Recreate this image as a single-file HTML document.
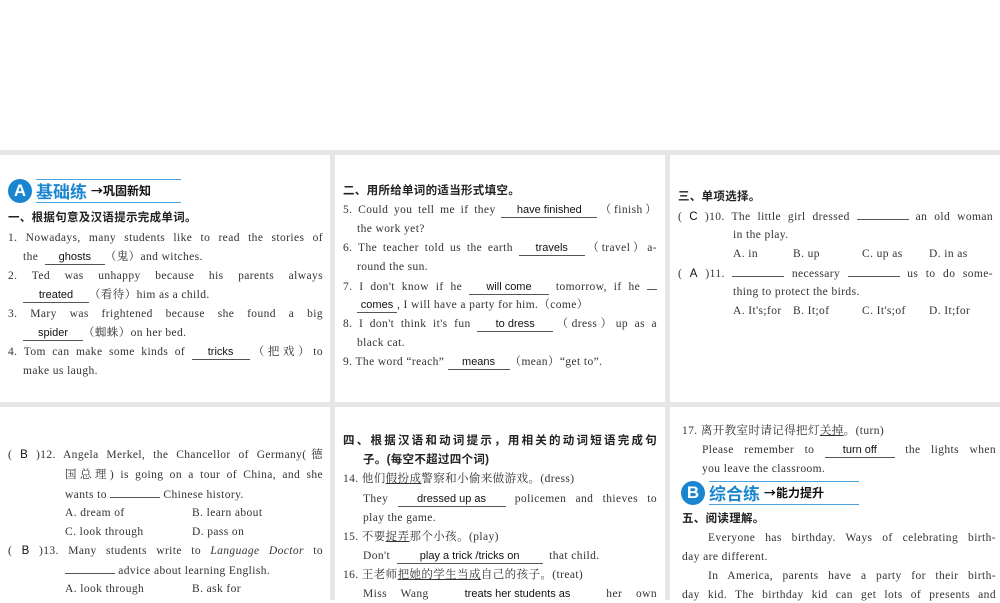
<!DOCTYPE html>
<html><head><meta charset="utf-8">
<style>
*{margin:0;padding:0;box-sizing:border-box}
body{width:1000px;height:600px;position:relative;background:#fff;overflow:hidden;font-family:"Liberation Serif","Noto Serif CJK SC",serif;color:#333}
.bg{position:absolute;left:0;top:150px;width:1000px;height:450px;background:#e6e6e6}
.p{position:absolute;background:#fff}
.l{position:absolute;white-space:nowrap;font-size:11.5px;line-height:16px;height:16px;letter-spacing:.4px}
.j{text-align:justify;text-align-last:justify}
.h{font-family:"Liberation Sans","Noto Sans CJK SC",sans-serif;font-weight:bold;font-size:11.5px;color:#222;letter-spacing:.3px}
.a{display:inline-block;border-bottom:1px solid #555;text-align:center;text-align-last:center;font-family:"Liberation Sans",sans-serif;font-size:11px;color:#111;line-height:13px;white-space:nowrap;letter-spacing:0}
.b{display:inline-block;border-bottom:1px solid #555;height:12px}
.k{font-family:"Liberation Sans",sans-serif;color:#111}
.badge{position:absolute;height:24px}
.badge .c{position:absolute;left:0;top:0;width:24px;height:24px;border-radius:50%;background:#1a86d0;color:#fff;font:bold 17px/24px "Liberation Sans",sans-serif;text-align:center}
.badge .t{position:absolute;left:28px;top:0;height:24px;border-top:1px solid #4aa3dc;border-bottom:1px solid #4aa3dc;white-space:nowrap;font-family:"Noto Sans CJK SC",sans-serif;display:flex;align-items:center;gap:4px;overflow:hidden}
.badge .t b{color:#1a86d0;font-size:17px;font-weight:bold;line-height:20px}
.badge .t i{font-style:normal;font-weight:bold;font-size:12px;color:#111;line-height:20px}
</style></head><body>
<div class="bg"></div>
<div class="p" style="left:0;top:155px;width:330px;height:247px"></div>
<div class="p" style="left:335px;top:155px;width:330px;height:247px"></div>
<div class="p" style="left:670px;top:155px;width:330px;height:247px"></div>
<div class="p" style="left:0;top:407px;width:330px;height:193px"></div>
<div class="p" style="left:335px;top:407px;width:330px;height:193px"></div>
<div class="p" style="left:670px;top:407px;width:330px;height:193px"></div>

<!-- panel 1 -->
<div class="badge" style="left:8px;top:179px"><div class="c">A</div><div class="t" style="width:145px"><b>基础练</b><i>→巩固新知</i></div></div>
<div class="l h" style="left:8px;top:210px">一、根据句意及汉语提示完成单词。</div>
<div class="l j" style="left:8px;top:230px;width:315px">1. Nowadays, many students like to read the stories of</div>
<div class="l" style="left:23px;top:249px">the &nbsp;<span class="a" style="width:60px">ghosts</span>（鬼）and witches.</div>
<div class="l j" style="left:8px;top:268px;width:315px">2. Ted was unhappy because his parents always</div>
<div class="l" style="left:23px;top:287px"><span class="a" style="width:66px">treated</span>（看待）him as a child.</div>
<div class="l j" style="left:8px;top:306px;width:315px">3. Mary was frightened because she found a big</div>
<div class="l" style="left:23px;top:325px"><span class="a" style="width:60px">spider</span>（蜘蛛）on her bed.</div>
<div class="l j" style="left:8px;top:344px;width:315px">4. Tom can make some kinds of <span class="a" style="width:58px">tricks</span>（把戏）to</div>
<div class="l" style="left:23px;top:363px">make us laugh.</div>

<!-- panel 2 -->
<div class="l h" style="left:343px;top:183px">二、用所给单词的适当形式填空。</div>
<div class="l j" style="left:343px;top:202px;width:314px">5. Could you tell me if they <span class="a" style="width:96px">have finished</span>（finish）</div>
<div class="l" style="left:357px;top:221px">the work yet?</div>
<div class="l j" style="left:343px;top:240px;width:314px">6. The teacher told us the earth <span class="a" style="width:66px">travels</span>（travel）a-</div>
<div class="l" style="left:357px;top:259px">round the sun.</div>
<div class="l j" style="left:343px;top:278px;width:314px">7. I don't know if he <span class="a" style="width:80px">will come</span> tomorrow, if he <span class="b" style="width:10px"></span></div>
<div class="l" style="left:357px;top:297px"><span class="a" style="width:40px">comes</span>, I will have a party for him.（come）</div>
<div class="l j" style="left:343px;top:316px;width:314px">8. I don't think it's fun <span class="a" style="width:76px">to dress</span>（dress）up as a</div>
<div class="l" style="left:357px;top:335px">black cat.</div>
<div class="l" style="left:343px;top:354px">9. The word “reach” <span class="a" style="width:62px">means</span>（mean）“get to”.</div>

<!-- panel 3 -->
<div class="l h" style="left:678px;top:189px">三、单项选择。</div>
<div class="l j" style="left:678px;top:208px;width:315px">( <span class="k">C</span> )10. The little girl dressed <span class="b" style="width:52px"></span> an old woman</div>
<div class="l" style="left:733px;top:227px">in the play.</div>
<div class="l" style="left:733px;top:246px">A. in</div><div class="l" style="left:793px;top:246px">B. up</div><div class="l" style="left:862px;top:246px">C. up as</div><div class="l" style="left:929px;top:246px">D. in as</div>
<div class="l j" style="left:678px;top:265px;width:315px">( <span class="k">A</span> )11. <span class="b" style="width:52px"></span> necessary <span class="b" style="width:52px"></span> us to do some-</div>
<div class="l" style="left:733px;top:284px">thing to protect the birds.</div>
<div class="l" style="left:733px;top:303px">A. It's;for</div><div class="l" style="left:793px;top:303px">B. It;of</div><div class="l" style="left:862px;top:303px">C. It's;of</div><div class="l" style="left:929px;top:303px">D. It;for</div>

<!-- row2 panel1 -->
<div class="l j" style="left:8px;top:447px;width:315px">( <span class="k">B</span> )12. Angela Merkel, the Chancellor of Germany(德</div>
<div class="l j" style="left:65px;top:467px;width:258px">国总理) is going on a tour of China, and she</div>
<div class="l" style="left:65px;top:486px">wants to <span class="b" style="width:50px"></span> Chinese history.</div>
<div class="l" style="left:65px;top:505px">A. dream of</div><div class="l" style="left:192px;top:505px">B. learn about</div>
<div class="l" style="left:65px;top:524px">C. look through</div><div class="l" style="left:192px;top:524px">D. pass on</div>
<div class="l j" style="left:8px;top:543px;width:315px">( <span class="k">B</span> )13. Many students write to <i>Language Doctor</i> to</div>
<div class="l" style="left:65px;top:562px"><span class="b" style="width:50px"></span> advice about learning English.</div>
<div class="l" style="left:65px;top:581px">A. look through</div><div class="l" style="left:192px;top:581px">B. ask for</div>

<!-- row2 panel2 -->
<div class="l h j" style="left:343px;top:433px;width:314px">四、根据汉语和动词提示，用相关的动词短语完成句</div>
<div class="l h" style="left:363px;top:452px">子。(每空不超过四个词)</div>
<div class="l" style="left:343px;top:471px">14. 他们<u>假扮成</u>警察和小偷来做游戏。(dress)</div>
<div class="l j" style="left:363px;top:491px;width:294px">They <span class="a" style="width:108px">dressed up as</span> policemen and thieves to</div>
<div class="l" style="left:363px;top:510px">play the game.</div>
<div class="l" style="left:343px;top:529px">15. 不要<u>捉弄</u>那个小孩。(play)</div>
<div class="l" style="left:363px;top:548px">Don't &nbsp;<span class="a" style="width:146px">play a trick /tricks on</span> &nbsp;that child.</div>
<div class="l" style="left:343px;top:567px">16. 王老师<u>把她的学生当成</u>自己的孩子。(treat)</div>
<div class="l j" style="left:363px;top:586px;width:294px">Miss Wang <span class="a" style="width:150px;border:0">treats her students as</span> her own</div>

<!-- row2 panel3 -->
<div class="l" style="left:682px;top:423px">17. 离开教室时请记得把灯<u>关掉</u>。(turn)</div>
<div class="l j" style="left:702px;top:442px;width:294px">Please remember to <span class="a" style="width:70px">turn off</span> the lights when</div>
<div class="l" style="left:702px;top:461px">you leave the classroom.</div>
<div class="badge" style="left:681px;top:481px"><div class="c">B</div><div class="t" style="width:150px"><b>综合练</b><i>→能力提升</i></div></div>
<div class="l h" style="left:682px;top:511px">五、阅读理解。</div>
<div class="l j" style="left:708px;top:530px;width:288px">Everyone has birthday. Ways of celebrating birth-</div>
<div class="l" style="left:682px;top:549px">day are different.</div>
<div class="l j" style="left:708px;top:568px;width:288px">In America, parents have a party for their birth-</div>
<div class="l j" style="left:682px;top:587px;width:314px">day kid. The birthday kid can get lots of presents and</div>
</body></html>
